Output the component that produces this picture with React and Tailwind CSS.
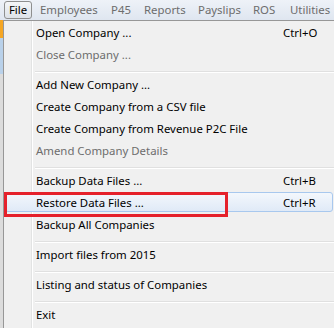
const menuBar = [
  { label: "Employees", w: "w-[71px]" },
  { label: "P45", w: "w-[33px]" },
  { label: "Reports", w: "w-[54px]" },
  { label: "Payslips", w: "w-[55px]" },
  { label: "ROS", w: "w-[37px]" },
  { label: "Utilities", w: "w-[44px]" },
];

const items = [
  { label: "Open Company ...", shortcut: "Ctrl+O" },
  { label: "Close Company ...", disabled: true },
  { sep: true },
  { label: "Add New Company ..." },
  { label: "Create Company from a CSV file" },
  { label: "Create Company from Revenue P2C File" },
  { label: "Amend Company Details", disabled: true },
  { sep: true },
  { label: "Backup Data Files ...", shortcut: "Ctrl+B" },
  { label: "Restore Data Files ...", shortcut: "Ctrl+R", active: true },
  { label: "Backup All Companies" },
  { sep: true },
  { label: "Import files from 2015" },
  { sep: true },
  { label: "Listing and status of Companies" },
  { sep: true },
  { label: "Exit" },
];

function MenuItem({ item }) {
  if (item.sep) {
    return (
      <div className="h-[8px] pt-[5px] pl-[31px]">
        <div className="h-px bg-[#e0e0e0]" />
        <div className="h-px bg-white" />
      </div>
    );
  }
  return (
    <div className="relative flex h-[22px] items-center">
      {item.active && (
        <div className="absolute inset-x-[1px] top-0 bottom-[2px] rounded-[3px] border border-[#a8c8ee] bg-gradient-to-b from-[#f3f7fc] to-[#e0eaf7]" />
      )}
      <span
        className={`relative pl-[32px] w-[279px] ${
          item.disabled ? "text-[#6d6d6d]" : "text-black"
        }`}
      >
        {item.label}
      </span>
      {item.shortcut && <span className="relative text-black">{item.shortcut}</span>}
    </div>
  );
}

export default function App() {
  return (
    <div
      className="relative h-[328px] w-[334px] overflow-hidden bg-[#f0f0f0] text-[11.4px] leading-none"
      style={{ fontFamily: '"Noto Sans", "Open Sans", sans-serif' }}
    >
      <div className="flex h-[20px] items-center bg-gradient-to-b from-[#eef2f8] to-[#dfe6f0] text-[#6d6d6d]">
        <div className="ml-[4px] flex h-[18px] w-[28px] items-center justify-center rounded-[3px] border border-[#8e8f8f] bg-gradient-to-b from-[#f4f6f8] to-[#dde2e8] text-black">
          File
        </div>
        <div className="ml-[8px] flex">
          {menuBar.map((m) => (
            <span key={m.label} className={`${m.w} shrink-0`}>
              {m.label}
            </span>
          ))}
        </div>
      </div>
      <div className="flex h-[308px]">
        <div className="w-[3px] flex flex-col">
          <div className="h-[18px] bg-[#f5a623]" />
          <div className="h-[36px] bg-[#b9d1ea]" />
          <div className="flex-1 bg-[#dcdcdc]" />
        </div>
        <div className="relative flex-1 border-l border-t border-[#979797] bg-[#f0f0f0] pt-[1px]">
          <div className="absolute left-[27px] top-0 bottom-0 w-px bg-[#e2e3e3]" />
          <div className="absolute left-[28px] top-0 bottom-0 w-px bg-white" />
          {items.map((it, i) => (
            <MenuItem key={i} item={it} />
          ))}
        </div>
      </div>
      <div className="absolute left-[4px] top-[192px] h-[25px] w-[224px] border-[3px] border-[#e5212b]" />
    </div>
  );
}
